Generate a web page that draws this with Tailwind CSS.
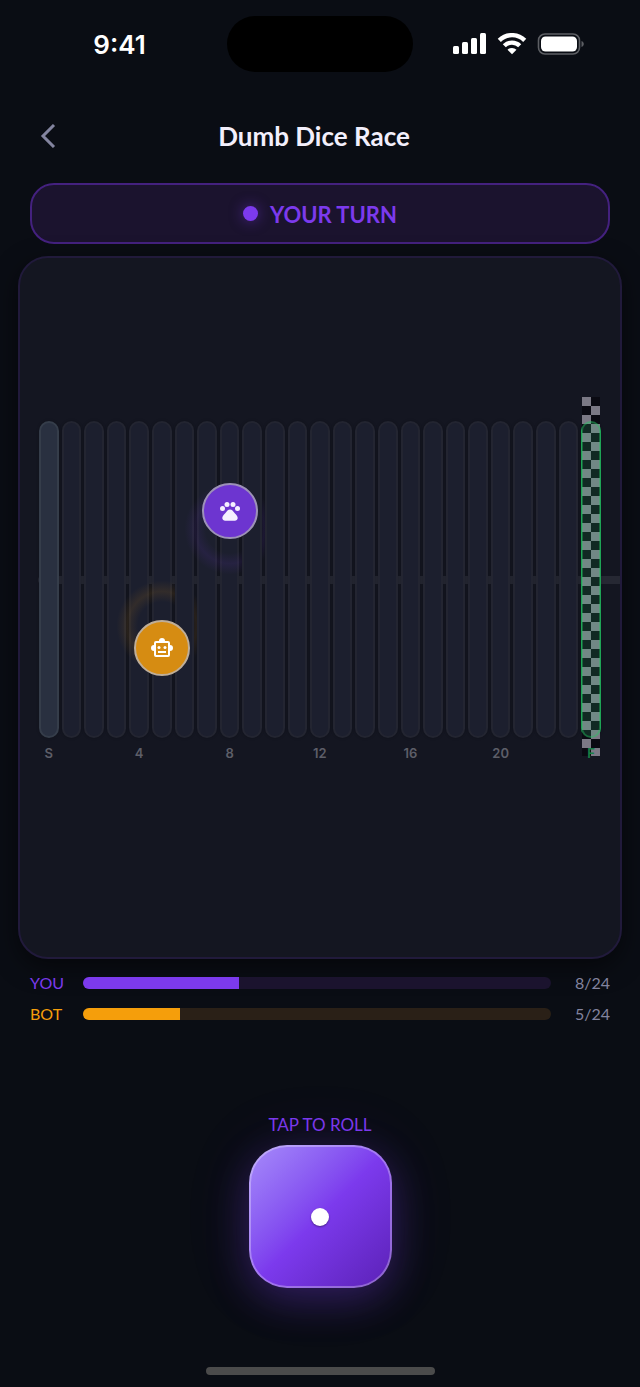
<!DOCTYPE html>
<html lang="en">
<head>
    <meta charset="UTF-8">
    <meta name="viewport" content="width=device-width, initial-scale=1.0">
    <title>Dumb Dice Race</title>
    <script src="https://cdn.jsdelivr.net/npm/@tailwindcss/browser@4"></script>
</head>
<body class="bg-[#0a0d14] min-h-screen flex flex-col font-[Lato,sans-serif] text-white">
    <!-- Status Bar -->
    <div class="grid grid-cols-[1fr_186px_1fr] items-center pt-4 h-18">
        <span class="pl-3 pt-0.5 text-center font-[Inter,sans-serif] text-[26px] leading-8 font-semibold">9:41</span>
        <div class="h-14 rounded-full bg-black"></div>
        <div class="flex items-center gap-2.5 pl-10">
            <svg class="w-[34px] h-[22px]" viewBox="0 0 34 22" fill="#fff">
                <rect x="0" y="13" width="6" height="8" rx="1.5"/>
                <rect x="9" y="9" width="6" height="12" rx="1.5"/>
                <rect x="18" y="5" width="6" height="16" rx="1.5"/>
                <rect x="27" y="0" width="6" height="21" rx="1.5"/>
            </svg>
            <svg class="w-[30px] h-[22px]" viewBox="0 0 30 22">
                <g fill="none" stroke="#fff" stroke-width="4.4">
                    <path d="M2.3 7.4a18 18 0 0 1 25.4 0"/>
                    <path d="M7.3 12.8a11 11 0 0 1 15.4 0"/>
                </g>
                <path d="M10.5 16.8a6.6 6.6 0 0 1 9 0L15 21.3z" fill="#fff"/>
            </svg>
            <svg class="w-[47px] h-[22px]" viewBox="0 0 47 22">
                <rect x="1.5" y="1" width="41" height="20" rx="6.5" fill="none" stroke="#5d5f64" stroke-width="1.6"/>
                <rect x="4" y="3.5" width="36" height="15" rx="4.5" fill="#fff"/>
                <path d="M44.5 8c3 1 3 5 0 6z" fill="#5d5f64"/>
            </svg>
        </div>
    </div>

    <!-- Header -->
    <header class="relative flex items-center justify-center mt-10 px-8 h-12">
        <button class="absolute left-8 p-2" aria-label="Back">
            <svg class="w-4 h-6" viewBox="0 0 16 24" fill="none" stroke="#83849f" stroke-width="3">
                <path d="M14 1 3 12l11 11"/>
            </svg>
        </button>
        <h1 class="mr-3 text-[26px] leading-8 font-bold text-[#f3effc]">Dumb Dice Race</h1>
    </header>

    <main class="flex-1 flex flex-col pt-[23px]">
        <!-- Turn banner -->
        <div class="mx-[30px] h-[61px] flex items-center justify-center gap-3 rounded-3xl border-2 border-[#44217f] bg-[#1b132e]">
            <span class="size-[15px] rounded-full bg-[#7c3aed] shadow-[0_0_14px_#7c3aed80]"></span>
            <span class="pt-0.5 text-[22px] leading-7 font-bold text-[#7c3aed]">YOUR TURN</span>
        </div>

        <!-- Board -->
        <section class="mx-[18px] mt-3 flex-1 rounded-[30px] border-2 border-[#211a3b] bg-[#141621] px-[19px] pt-[163px] shadow-[0_8px_24px_#00000080]">
            <div class="relative">
                <div class="absolute -left-px -right-[19px] top-1/2 -mt-1 h-2 rounded-l-full bg-[#262833]"></div>
                <div id="lanes" class="flex gap-[3px] h-[317px]"></div>
            </div>
            <div id="labels" class="flex gap-[3px] mt-[7px] font-[Inter,sans-serif] text-[13px] leading-4 font-semibold text-[#5d5e68]"></div>
        </section>

        <!-- Progress -->
        <section class="grid grid-cols-[53px_1fr_59px] items-center gap-y-[11px] mt-[14px] px-[30px] text-base leading-5">
            <span class="text-[#7c3aed]">YOU</span>
            <div class="h-3 rounded-full bg-[#1b132e] overflow-hidden">
                <div class="h-full bg-[#7c3aed]" style="width: 33.33%"></div>
            </div>
            <span class="text-right text-[#83849f]">8/24</span>
            <span class="text-[#f59e0b]">BOT</span>
            <div class="h-3 rounded-full bg-[#2a2017] overflow-hidden">
                <div class="h-full bg-[#f59e0b]" style="width: 20.83%"></div>
            </div>
            <span class="text-right text-[#83849f]">5/24</span>
        </section>

        <!-- Dice -->
        <section class="flex flex-col items-center mt-[91px]">
            <label for="roll" class="text-[17px] leading-5 text-[#7c3aed]">TAP TO ROLL</label>
            <button id="roll" class="mt-2.5 size-[143px] flex items-center justify-center rounded-[38px] border-2 border-white/30 bg-linear-135 from-[#a78bfa] via-[#7c3aed] to-[#5b21b6] bg-origin-border shadow-[0_12px_40px_#7c3aed4d,0_0_70px_#7c3aed1a]">
                <span class="size-[18px] rounded-full bg-white shadow-[0_1px_2px_#00000066]"></span>
            </button>
        </section>
    </main>

    <!-- Home indicator -->
    <div class="mx-auto mt-[79px] mb-3 w-[229px] h-2 rounded-full bg-[#4b4b4b]"></div>

    <script>
        const paw = `
            <svg class="size-6" viewBox="0 0 24 24" fill="#f5f0ff">
                <circle cx="4.5" cy="9.5" r="2.5"/>
                <circle cx="9" cy="5.5" r="2.5"/>
                <circle cx="15" cy="5.5" r="2.5"/>
                <circle cx="19.5" cy="9.5" r="2.5"/>
                <path d="M17 14.500l-2.500-2.900c-1.400-1.500-3.600-1.500-5 0L7 14.500c-1.300 1.400-2.900 2.800-2.700 4.800.3 1.500 1.300 2.500 2.800 2.500h9.800c1.500 0 2.500-1 2.800-2.500.2-2-1.400-3.400-2.700-4.800z"/>
            </svg>`;
        const robot = `
            <svg class="size-6" viewBox="0 0 24 24" fill="#fff">
                <path fill-rule="evenodd" d="M20 9V7a2 2 0 0 0-2-2h-3a3 3 0 0 0-6 0H6a2 2 0 0 0-2 2v2a3 3 0 0 0 0 6v4a2 2 0 0 0 2 2h12a2 2 0 0 0 2-2v-4a3 3 0 0 0 0-6zM6 19V7h12v12z"/>
                <circle cx="9" cy="11.5" r="1.5"/>
                <circle cx="15" cy="11.5" r="1.5"/>
                <path d="M8 15h8v2H8z"/>
            </svg>`;

        // Pieces, keyed by the space they stand on
        const pieces = {
            8: `<div class="absolute left-1/2 top-[34%] size-24 -translate-1/2 rounded-full bg-radial-[closest-side] from-transparent from-50% via-[#7c3aed1a] via-72% to-transparent to-95%"></div>
                <div class="absolute z-10 left-1/2 top-[28%] size-14 -translate-1/2 flex items-center justify-center rounded-full border-2 border-[#9d91b8] bg-[#6d35d0]">${paw}</div>`,
            5: `<div class="absolute left-1/2 top-[65%] size-24 -translate-1/2 rounded-full bg-radial-[closest-side] from-transparent from-50% via-[#f59e0b1a] via-72% to-transparent to-95%"></div>
                <div class="absolute z-10 left-1/2 top-[72%] size-14 -translate-1/2 flex items-center justify-center rounded-full border-2 border-[#bfae98] bg-[#d68c12]">${robot}</div>`
        };

        const lanes = document.getElementById('lanes');
        const labels = document.getElementById('labels');

        for (let i = 0; i <= 24; i++) {
            let style = 'border-[#232531] bg-[#1c1f2e]';
            let inner = pieces[i] || '';
            if (i === 0) style = 'border-[#353d4a] bg-[#293040]';
            if (i === 24) {
                style = 'border-[#178045]';
                inner = `
                    <div class="absolute -inset-x-px -top-[26px] -bottom-5 bg-[repeating-conic-gradient(#0a0a12_0_25%,#7b7985_0_50%)] bg-size-[18px_18px]"></div>
                    <div class="absolute -inset-0.5 rounded-[10px] border-2 border-[#22c55e66] bg-[#3cdc8826]"></div>`;
            }
            lanes.innerHTML += `<div class="relative flex-1 rounded-[10px] border-2 shadow-[0_0_3px_#00000040] ${style}">${inner}</div>`;

            const text = i === 0 ? 'S' : i === 24 ? 'F' : i % 4 === 0 ? i : '';
            labels.innerHTML += `<span class="relative flex-1 w-0 flex justify-center ${i === 24 ? 'text-[#178045]' : ''}">${text}</span>`;
        }
    </script>
</body>
</html>
